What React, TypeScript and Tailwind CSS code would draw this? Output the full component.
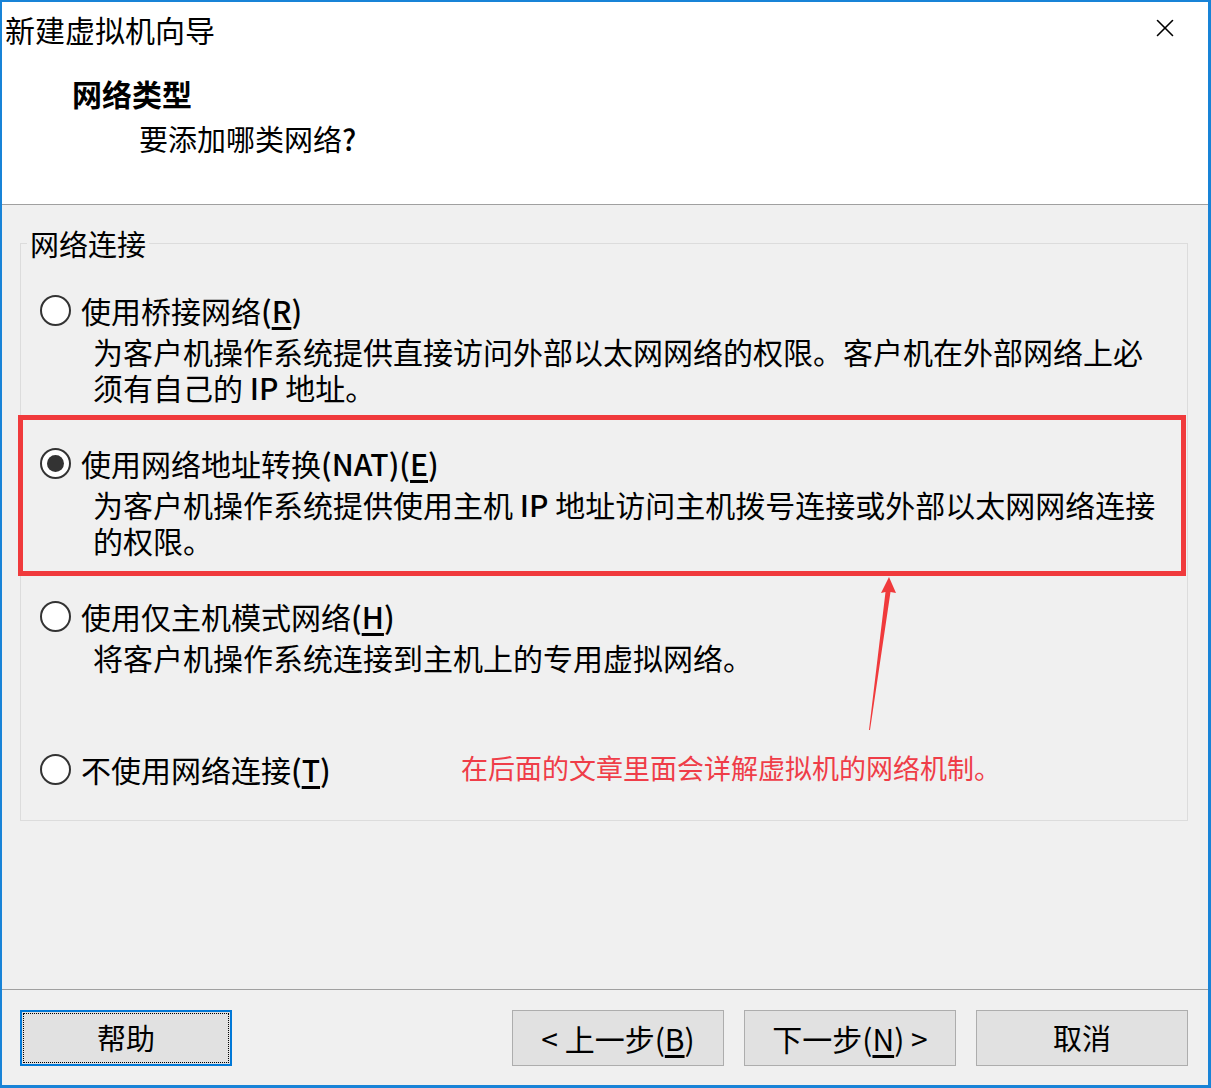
import { X } from 'lucide-react'

const font = { fontFamily: '"Noto Sans CJK SC", "Noto Sans", sans-serif' }

function Radio({ checked }: { checked?: boolean }) {
  return (
    <span className="flex h-[31px] w-[31px] shrink-0 items-center justify-center rounded-full border-2 border-[#333333] bg-white">
      {checked && <span className="h-[17px] w-[17px] rounded-full bg-[#333333]" />}
    </span>
  )
}

function Option({
  label,
  hotkey,
  checked,
  lines,
}: {
  label: React.ReactNode
  hotkey: string
  checked?: boolean
  lines: React.ReactNode[]
}) {
  return (
    <div>
      <div className="flex h-[40px] items-center gap-[10px]">
        <Radio checked={checked} />
        <span className="text-[30px] leading-[40px] text-black">
          {label}
          <span className="font-medium">
            (<span className="underline underline-offset-4">{hotkey}</span>)
          </span>
        </span>
      </div>
      {lines.length > 0 && (
        <div className="mt-[3px] pl-[53px] text-[30px] leading-[36px] text-black">
          {lines.map((l, i) => (
            <div key={i} className="whitespace-nowrap">
              {l}
            </div>
          ))}
        </div>
      )}
    </div>
  )
}

function Button({ children, focused }: { children: React.ReactNode; focused?: boolean }) {
  return (
    <button
      className={
        'flex h-[56px] w-[212px] items-center justify-center bg-[#e1e1e1] text-[29px] text-black ' +
        (focused
          ? 'border-2 border-[#0078d7] outline-1 -outline-offset-4 outline-dotted outline-black'
          : 'border border-[#adadad]')
      }
    >
      {children}
    </button>
  )
}

export default function App() {
  return (
    <div
      style={font}
      className="flex h-[1088px] w-[1211px] flex-col border-b-[3px] border-l-2 border-r-[3px] border-t-2 border-[#1883d7] bg-[#f0f0f0]"
    >
      {/* header */}
      <div className="border-b border-[#a0a0a0] bg-white pb-[46px] pt-[7px]">
        <div className="flex items-center justify-between pl-[3px] pr-[28px]">
          <span className="text-[30px] leading-[40px] text-black">新建虚拟机向导</span>
          <X className="mb-[2px] h-[30px] w-[30px] text-black" strokeWidth={1.3} />
        </div>
        <div className="mt-[24px] pl-[70px] text-[30px] font-bold leading-[40px] text-black">网络类型</div>
        <div className="mt-[5px] pl-[137px] text-[29px] leading-[40px] text-black">
          要添加哪类网络<span className="font-medium">?</span>
        </div>
      </div>

      {/* body */}
      <div className="relative ml-[18px] mr-[20px] mt-[38px] border border-[#dcdcdc] pb-[31px] pl-[19px] pr-[19px] pt-[46px]">
        <span className="absolute -top-[21px] left-[6px] bg-[#f0f0f0] px-[3px] text-[29px] leading-[40px] text-black">
          网络连接
        </span>

        <Option
          label="使用桥接网络"
          hotkey="R"
          lines={[
            '为客户机操作系统提供直接访问外部以太网网络的权限。客户机在外部网络上必',
            <>
              须有自己的 <span className="font-medium">IP</span> 地址。
            </>,
          ]}
        />

        <div className="-ml-[22px] -mr-[18px] mt-[10px] border-[5px] border-[#f03a3c] pb-[13px] pl-[17px] pt-[23px]">
          <Option
            label={
              <>
                使用网络地址转换<span className="font-medium">(NAT)</span>
              </>
            }
            hotkey="E"
            checked
            lines={[
              <>
                为客户机操作系统提供使用主机 <span className="font-medium">IP</span> 地址访问主机拨号连接或外部以太网网络连接
              </>,
              '的权限。',
            ]}
          />
        </div>

        <div className="mt-[20px]">
          <Option label="使用仅主机模式网络" hotkey="H" lines={['将客户机操作系统连接到主机上的专用虚拟网络。']} />
        </div>

        <div className="mt-[74px] flex items-center">
          <div className="w-[421px] shrink-0">
            <Option label="不使用网络连接" hotkey="T" lines={[]} />
          </div>
          <span className="-mt-[3px] text-[27px] leading-[36px] text-[#ef3d48]">在后面的文章里面会详解虚拟机的网络机制。</span>
        </div>

        {/* annotation arrow */}
        <svg className="absolute left-[848px] top-[332px] h-[155px] w-[40px]" viewBox="0 0 40 155">
          <polygon points="20,1 12,17 16.5,16 0,154 1,154 21.5,16 27,17" fill="#f03a3c" />
        </svg>
      </div>

      <div className="flex-1" />

      {/* footer */}
      <div className="border-t border-[#a0a0a0] pb-[19px] pl-[18px] pr-[20px] pt-[20px]">
        <div className="flex items-center">
          <Button focused>帮助</Button>
          <div className="ml-auto flex gap-[20px]">
            <Button>
              <span className="text-[30px]">
                &lt; 上一步(<span className="underline underline-offset-4">B</span>)
              </span>
            </Button>
            <Button>
              <span className="text-[30px]">
                下一步(<span className="underline underline-offset-4">N</span>) &gt;
              </span>
            </Button>
            <Button>取消</Button>
          </div>
        </div>
      </div>
    </div>
  )
}
